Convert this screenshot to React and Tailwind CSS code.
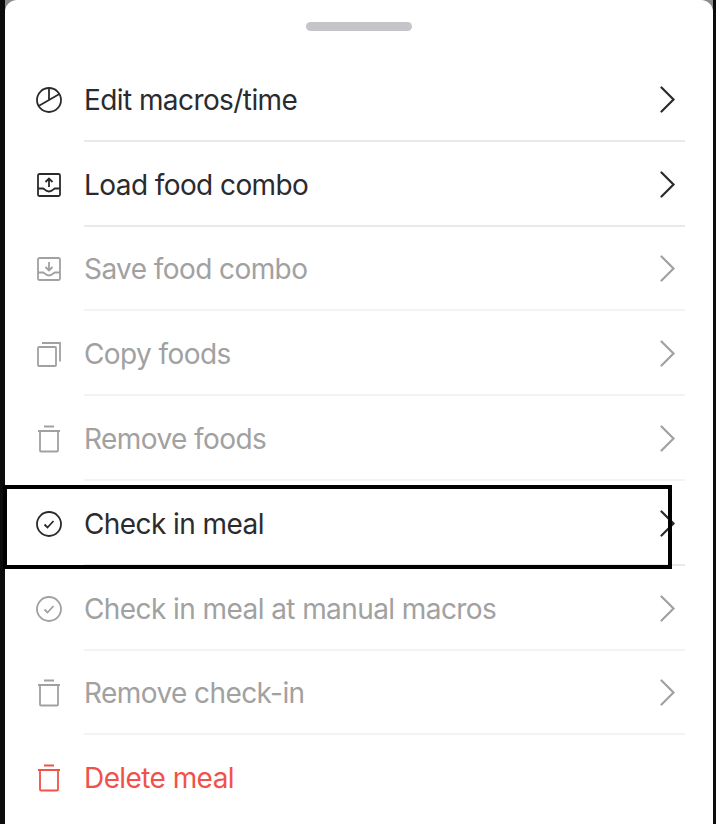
import React from "react";

const Pie = () => (
  <>
    <circle cx="14" cy="14" r="12" />
    <path d="M14 2V14M3.6 20L24.4 8" />
  </>
);
const Tray = ({ up }) => (
  <>
    <rect x="3" y="3" width="22" height="22" rx="1.5" />
    <path d="M3 17.5H8C9.5 17.5 10 20.5 14 20.5S18.5 17.5 20 17.5H25" />
    {up ? <path d="M14 16V7.5M10.5 11L14 7.5L17.5 11" /> : <path d="M14 7V15.5M10.5 12L14 15.5L17.5 12" />}
  </>
);
const Copy = () => (
  <>
    <rect x="3" y="7" width="18" height="19" rx="1" />
    <path d="M7 3H25V21.5" />
  </>
);
const Trash = () => (
  <>
    <path d="M9 1.5H19M3 6H25" />
    <path d="M5 6V25.5C5 26.2 5.5 26.5 6 26.5H22C22.5 26.5 23 26.2 23 25.5V6" />
  </>
);
const Check = () => (
  <>
    <circle cx="14" cy="14" r="12" />
    <path d="M9.5 14.5L12.5 17.5L18.5 11" />
  </>
);

const icons = {
  pie: <Pie />,
  up: <Tray up />,
  down: <Tray />,
  copy: <Copy />,
  trash: <Trash />,
  check: <Check />,
};

const rows = [
  { label: "Edit macros/time", icon: "pie", tone: "dark" },
  { label: "Load food combo", icon: "up", tone: "dark" },
  { label: "Save food combo", icon: "down", tone: "muted" },
  { label: "Copy foods", icon: "copy", tone: "muted" },
  { label: "Remove foods", icon: "trash", tone: "muted" },
  { label: "Check in meal", icon: "check", tone: "dark" },
  { label: "Check in meal at manual macros", icon: "check", tone: "muted" },
  { label: "Remove check-in", icon: "trash", tone: "muted" },
  { label: "Delete meal", icon: "trash", tone: "red" },
];

const toneClass = {
  dark: "text-[#2b2b2e]",
  muted: "text-[#a1a1a1]",
  red: "text-[#f0524a]",
};

function Row({ label, icon, tone, last }) {
  return (
    <div className={`flex h-[84.8px] items-center ${toneClass[tone]}`}>
      <svg
        className="ml-[30px] mt-[1px] shrink-0"
        width="28"
        height="28"
        viewBox="0 0 28 28"
        fill="none"
        stroke="currentColor"
        strokeWidth="1.8"
      >
        {icons[icon]}
      </svg>
      <div
        className={`ml-[21px] mr-[28px] flex h-full flex-1 items-center justify-between border-b-2 pt-[3px] ${
          last ? "border-transparent" : tone === "dark" ? "border-[#e9e9ed]" : "border-[#f3f3f3]"
        }`}
      >
        <span className="text-[28px] leading-[34px] tracking-[-0.58px]">{label}</span>
        {!last && (
          <svg
            className="mb-[1px] mr-[9px] shrink-0"
            width="17"
            height="27"
            viewBox="0 0 17 27"
            fill="none"
            stroke="currentColor"
            strokeWidth="2.2"
            strokeLinecap="round"
          >
            <path d="M2.5 1.5L14.5 13.5L2.5 25.5" />
          </svg>
        )}
      </div>
    </div>
  );
}

export default function App() {
  return (
    <div className="relative h-[824px] w-[716px] overflow-hidden bg-[#0c0c0c] pl-[5px] pr-[3px] font-['Inter',sans-serif]">
      <div className="h-full bg-[#8c8c8c]">
        <div className="h-full rounded-t-[12px] bg-white">
          <div className="flex h-[57px] justify-center pt-[22px]">
            <div className="h-[9px] w-[106px] rounded-full bg-[#c5c5c9]" />
          </div>
          {rows.map((r, i) => (
            <Row key={r.label} {...r} last={i === rows.length - 1} />
          ))}
        </div>
      </div>
      <div className="pointer-events-none absolute left-[3px] top-[485px] h-[84px] w-[669px] border-4 border-black" />
    </div>
  );
}
